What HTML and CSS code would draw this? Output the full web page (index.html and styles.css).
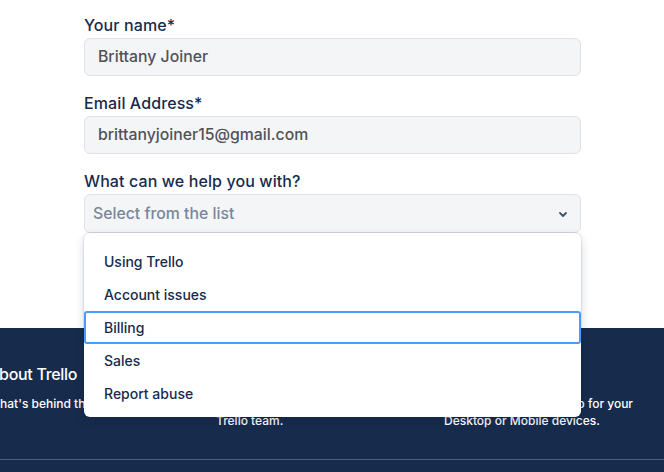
FILE: index.html
```html
<!DOCTYPE html>
<html lang="en">
<head>
<meta charset="utf-8">
<title>Contact Trello</title>
<link rel="stylesheet" href="styles.css">
</head>
<body>
<main class="page">
  <form class="form">
    <div class="field">
      <label class="label">Your name*</label>
      <div class="input">Brittany Joiner</div>
    </div>
    <div class="field">
      <label class="label">Email Address*</label>
      <div class="input">brittanyjoiner15@gmail.com</div>
    </div>
    <div class="field select-field">
      <label class="label">What can we help you with?</label>
      <div class="select">
        <span class="placeholder">Select from the list</span>
        <svg class="chevron" width="10" height="7" viewBox="0 0 10 7" aria-hidden="true"><path d="M2 2 L5 5 L8 2" fill="none" stroke="#42526E" stroke-width="1.8" stroke-linecap="round" stroke-linejoin="round"/></svg>
      </div>
      <ul class="menu">
        <li class="option">Using Trello</li>
        <li class="option">Account issues</li>
        <li class="option active">Billing</li>
        <li class="option">Sales</li>
        <li class="option">Report abuse</li>
      </ul>
    </div>
  </form>
</main>
<footer class="footer">
  <div class="cols">
    <div class="col">
      <h3 class="col-title">About Trello</h3>
      <p class="col-text">What's behind the boards.</p>
    </div>
    <div class="col">
      <h3 class="col-title">Jobs</h3>
      <p class="col-text">Learn about open roles on the<br>Trello team.</p>
    </div>
    <div class="col">
      <h3 class="col-title">Apps</h3>
      <p class="col-text">Download the Trello App for your<br>Desktop or Mobile devices.</p>
    </div>
    <div class="col">
      <h3 class="col-title">Contact us</h3>
      <p class="col-text">Need anything? Get in touch and<br>we can help.</p>
    </div>
  </div>
  <div class="rule"></div>
</footer>
</body>
</html>
```

FILE: styles.css
```css
* { box-sizing: border-box; }
html, body { margin: 0; padding: 0; }
body {
  width: 664px;
  height: 472px;
  overflow: hidden;
  background: #ffffff;
  font-family: Inter, "Noto Sans", "Liberation Sans", sans-serif;
  color: #172B4D;
}
.page {
  height: 328px;
  padding-top: 13px;
}
.form {
  width: 497px;
  margin: 0 0 0 84px;
  display: flex;
  flex-direction: column;
  gap: 15px;
}
.field {
  display: flex;
  flex-direction: column;
  gap: 1px;
}
.select-field { position: relative; z-index: 5; }
.label {
  font-size: 16px;
  line-height: 24px;
  font-weight: 500;
  color: #172B4D;
  letter-spacing: 0.1px;
}
.input, .select {
  height: 38px;
  background: #F4F5F7;
  border: 1px solid #DFE1E6;
  border-radius: 6px;
  font-size: 15.8px;
  line-height: 36px;
  color: #505258;
  padding: 0 13px;
  font-weight: 500;
}
.select {
  height: 39px;
  line-height: 37px;
  padding: 0 12px 0 8px;
  display: flex;
  align-items: center;
  justify-content: space-between;
}
.placeholder { color: #7A869A; font-weight: 500; }
.chevron { margin-top: 2px; }
.menu {
  position: absolute;
  left: 0;
  right: 0;
  top: 64px;
  margin: 0;
  padding: 12px 0 7px;
  list-style: none;
  background: #ffffff;
  border-radius: 6px;
  box-shadow: 0 0 0 1px rgba(9,30,66,0.08), 0 4px 10px rgba(9,30,66,0.18);
}
.option {
  height: 33px;
  padding: 0 20px;
  font-size: 14px;
  font-weight: 500;
  color: #172B4D;
  border-top: 2px solid transparent;
  border-bottom: 2px solid transparent;
  line-height: 29px;
}
.option.active {
  border: 2px solid #4C9AFF;
  border-radius: 3px;
  padding-left: 18px;
}
.footer {
  height: 144px;
  background: #172B4D;
  color: #ffffff;
  padding-top: 34px;
  overflow: hidden;
}
.cols {
  display: grid;
  grid-template-columns: repeat(4, 228px);
  margin-left: -12px;
  width: 912px;
}
.col { padding-right: 20px; }
.col-title {
  margin: 0 0 9px;
  font-size: 16px;
  line-height: 24px;
  font-weight: 500;
  letter-spacing: -0.3px;
}
.col-text {
  margin: 0;
  font-size: 12px;
  line-height: 17px;
  font-weight: 500;
}
.rule {
  height: 1px;
  background: #505F79;
  margin-top: 30px;
}
```
